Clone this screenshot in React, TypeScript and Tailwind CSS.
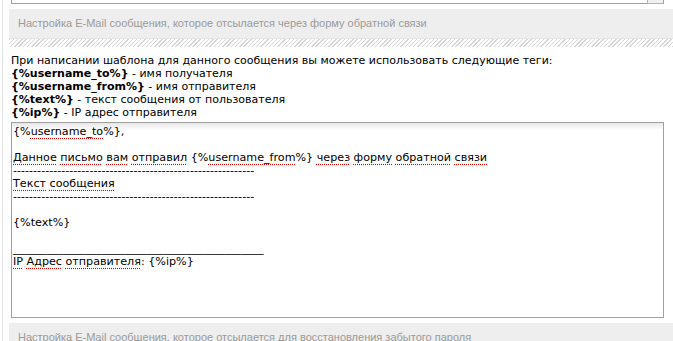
const Sp = ({ children }: { children: React.ReactNode }) => (
  <span className="underline decoration-dotted decoration-[#d40000] underline-offset-[3px]">{children}</span>
);

const SectionHeader = ({ title }: { title: string }) => (
  <div className="h-[29px] flex items-center bg-[#eeeeee] pl-[9px] font-['Liberation_Sans',Arial,sans-serif] text-[11px] text-[#9a9a9a]">
    {title}
  </div>
);

const dashes = '-'.repeat(60);
const underscores = '_'.repeat(45);

export default function App() {
  return (
    <div className="h-[341px] w-[673px] overflow-hidden bg-white">
      <div className="ml-[2px] h-full border-l border-[#e2e2e2] pl-[6px]">
        {/* bottom edge of the previous textarea */}
        <div className="ml-[2px] w-[653px] h-[4px] border-x border-b border-[#a0a0a0] flex justify-end">
          <div className="w-[16px] h-[4px] border-l border-b border-[#b5b5b5] bg-[#f0f0f0]" />
        </div>

        <div className="mt-[5px]">
          <SectionHeader title="Настройка E-Mail сообщения, которое отсылается через форму обратной связи" />
          <div className="h-[9px] border-t border-[#e4e4e4] bg-[repeating-linear-gradient(135deg,#d6d6d6_0px,#d6d6d6_1px,#ffffff_1px,#ffffff_3px)]" />
        </div>

        <div className="pl-[2px] mt-[7px] font-['DejaVu_Sans',Verdana,sans-serif] text-[11px] leading-[13px] text-black">
          <p>При написании шаблона для данного сообщения вы можете использовать следующие теги:</p>
          <p><b>{'{%username_to%}'}</b> - имя получателя</p>
          <p><b>{'{%username_from%}'}</b> - имя отправителя</p>
          <p><b>{'{%text%}'}</b> - текст сообщения от пользователя</p>
          <p><b>{'{%ip%}'}</b> - IP адрес отправителя</p>

          <div className="mt-[3px] w-[653px] h-[196px] border border-[#a0a0a0] bg-[linear-gradient(#e6e6e6,#ffffff_7px)] px-[1px] pt-[2px] whitespace-pre text-[11.15px] text-black">
            <div>{'{%'}<Sp>username_to</Sp>{'%},'}</div>
            <div>&nbsp;</div>
            <div>
              <Sp>Данное</Sp> <Sp>письмо</Sp> <Sp>вам</Sp> <Sp>отправил</Sp> {'{%'}<Sp>username_from</Sp>{'%}'} <Sp>через</Sp> <Sp>форму</Sp> <Sp>обратной</Sp> <Sp>связи</Sp>
            </div>
            <div>{dashes}</div>
            <div><Sp>Текст</Sp> <Sp>сообщения</Sp></div>
            <div>{dashes}</div>
            <div>&nbsp;</div>
            <div>{'{%text%}'}</div>
            <div>&nbsp;</div>
            <div>{underscores}</div>
            <div><Sp>IP</Sp> <Sp>Адрес</Sp> <Sp>отправителя</Sp>: {'{%ip%}'}</div>
          </div>
        </div>

        <div className="mt-[5px]">
          <SectionHeader title="Настройка E-Mail сообщения, которое отсылается для восстановления забытого пароля" />
        </div>
      </div>
    </div>
  );
}
